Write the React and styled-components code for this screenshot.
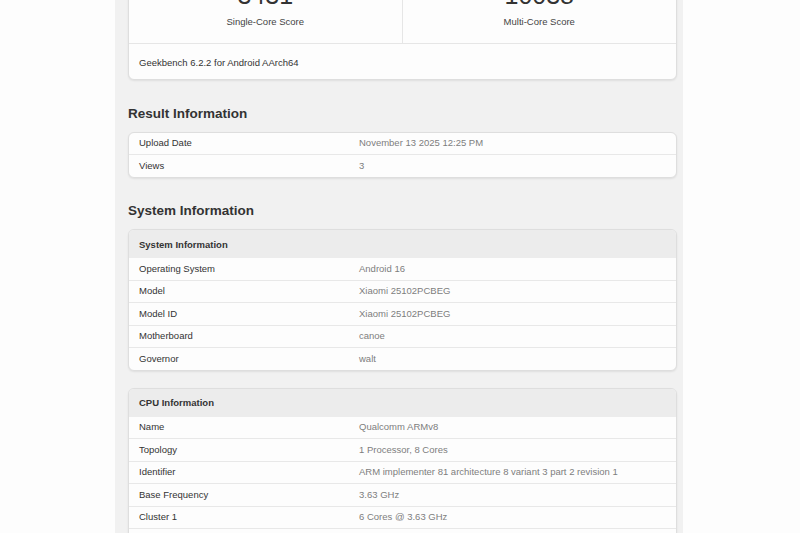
import styled, { createGlobalStyle } from 'styled-components';

const GlobalStyle = createGlobalStyle`
  html, body {
    margin: 0;
    padding: 0;
    background: #fdfdfd;
    font-family: "Liberation Sans", Arial, sans-serif;
    overflow: hidden;
  }
`;

const Page = styled.div`
  display: flex;
  justify-content: flex-start;
  min-height: 100vh;
`;

const Column = styled.div`
  margin-left: 115px;
  width: 568px;
  box-sizing: border-box;
  padding: 0 6px 40px 13px;
  background: #f1f1f1;
  min-height: 100vh;
`;

const Card = styled.div`
  background: #fdfdfd;
  border: 1px solid #dedede;
  border-radius: 6px;
  box-shadow: 0 1px 2px rgba(0, 0, 0, 0.08);
  overflow: hidden;
  margin-top: ${(p) => p.$gap || 0}px;
`;

const ScoreCard = styled(Card)`
  margin-top: -41px;
`;

const ScoreGrid = styled.div`
  display: grid;
  grid-template-columns: 1fr 1fr;
  border-bottom: 1px solid #e6e6e6;
`;

const ScoreCell = styled.div`
  display: flex;
  flex-direction: column;
  align-items: center;
  padding: 20px 0 15px;
  border-right: ${(p) => (p.$last ? 'none' : '1px solid #e6e6e6')};
`;

const ScoreValue = styled.div`
  font-size: 25px;
  line-height: 30px;
  color: #333;
`;

const ScoreLabel = styled.div`
  margin-top: 5px;
  font-size: 9.5px;
  line-height: 13px;
  color: #444;
`;

const Footer = styled.div`
  padding: 11.5px 10px 10.5px;
  font-size: 9.5px;
  line-height: 13px;
  color: #333;
`;

const SectionTitle = styled.h2`
  margin: 25.5px 0 10px;
  font-size: 13.5px;
  line-height: 16px;
  font-weight: bold;
  color: #333;
`;

const TableHead = styled.div`
  padding: 7.5px 10px;
  background: #ececec;
  font-size: 9.5px;
  line-height: 13px;
  font-weight: bold;
  color: #333;
`;

const Row = styled.div`
  display: grid;
  grid-template-columns: 220px 1fr;
  padding: 4.5px 10px;
  font-size: 9.5px;
  line-height: 12.5px;
  border-bottom: 1px solid #e8e8e8;

  &:last-child {
    border-bottom: none;
  }
`;

const Label = styled.span`
  color: #333;
`;

const Value = styled.span`
  color: #7d7d7d;
`;

const InfoTable = ({ title, rows, gap }) => (
  <Card $gap={gap}>
    {title && <TableHead>{title}</TableHead>}
    {rows.map(([label, value]) => (
      <Row key={label}>
        <Label>{label}</Label>
        <Value>{value}</Value>
      </Row>
    ))}
  </Card>
);

const resultRows = [
  ['Upload Date', 'November 13 2025 12:25 PM'],
  ['Views', '3'],
];

const systemRows = [
  ['Operating System', 'Android 16'],
  ['Model', 'Xiaomi 25102PCBEG'],
  ['Model ID', 'Xiaomi 25102PCBEG'],
  ['Motherboard', 'canoe'],
  ['Governor', 'walt'],
];

const cpuRows = [
  ['Name', 'Qualcomm ARMv8'],
  ['Topology', '1 Processor, 8 Cores'],
  ['Identifier', 'ARM implementer 81 architecture 8 variant 3 part 2 revision 1'],
  ['Base Frequency', '3.63 GHz'],
  ['Cluster 1', '6 Cores @ 3.63 GHz'],
  ['Cluster 2', '2 Cores @ 4.61 GHz'],
  ['L1 Instruction Cache', '192 KB x 1'],
];

const App = () => {
  return (
    <>
      <GlobalStyle />
      <Page>
        <Column>
          <ScoreCard>
            <ScoreGrid>
              <ScoreCell>
                <ScoreValue>3431</ScoreValue>
                <ScoreLabel>Single-Core Score</ScoreLabel>
              </ScoreCell>
              <ScoreCell $last>
                <ScoreValue>10038</ScoreValue>
                <ScoreLabel>Multi-Core Score</ScoreLabel>
              </ScoreCell>
            </ScoreGrid>
            <Footer>Geekbench 6.2.2 for Android AArch64</Footer>
          </ScoreCard>

          <SectionTitle>Result Information</SectionTitle>
          <InfoTable rows={resultRows} />

          <SectionTitle>System Information</SectionTitle>
          <InfoTable title='System Information' rows={systemRows} />
          <InfoTable title='CPU Information' rows={cpuRows} gap={17} />
        </Column>
      </Page>
    </>
  );
};

export default App;
